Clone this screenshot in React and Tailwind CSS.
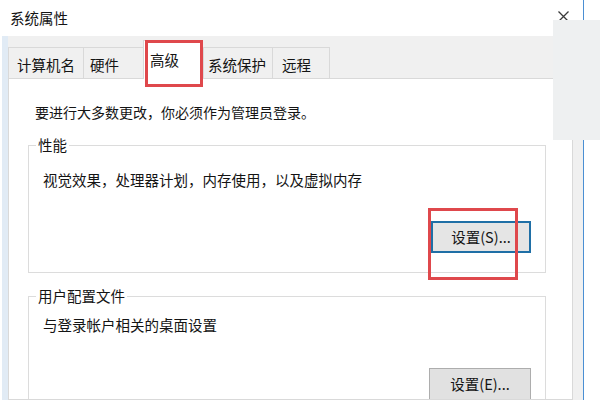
export default function App() {
  const tabs = [
    { label: '计算机名', w: 'w-[75px]', pl: 'pl-[8px]' },
    { label: '硬件', w: 'w-[60px]', pl: 'pl-[6px]' },
    { label: '高级', w: 'w-[60px]', pl: 'pl-[6px]', active: true },
    { label: '系统保护', w: 'w-[69px]', pl: 'pl-[4px]' },
    { label: '远程', w: 'w-[58px]', pl: 'pl-[9px]', last: true },
  ];

  return (
    <div className="relative w-[600px] h-[400px] overflow-hidden bg-white text-[#141414] font-['Noto_Sans_CJK_SC',sans-serif]">
      <div className="flex h-full">
        <div className="w-[2px] shrink-0 bg-white" />
        <div className="w-[582px] shrink-0 flex flex-col border-r border-[#4b8fd3]">
          {/* title bar */}
          <div className="h-[36px] shrink-0 bg-white flex items-center justify-between pl-[8px] pr-[14px]">
            <span className="text-[14.5px] leading-[20px]">系统属性</span>
            <svg width="11" height="11" viewBox="0 0 11 11" className="mb-[4px]">
              <path d="M0.5 0.5 L10.5 10.5 M10.5 0.5 L0.5 10.5" stroke="#3a3a3a" strokeWidth="1.3" />
            </svg>
          </div>

          {/* dialog body */}
          <div className="flex-1 min-h-0 overflow-hidden flex flex-col bg-[#f0f0f0] border-l-[6px] border-[#e1ebf5] pr-[10px]">
            {/* tab strip */}
            <div className="h-[42px] shrink-0 flex items-end">
              {tabs.map((t) =>
                t.active ? (
                  <div
                    key={t.label}
                    className={`relative z-10 ${t.w} h-[39px] -mb-[1px] bg-white border-t border-l border-[#d9d9d9] flex items-center ${t.pl} pb-[1px] text-[14.5px]`}
                  >
                    {t.label}
                  </div>
                ) : (
                  <div
                    key={t.label}
                    className={`${t.w} h-[31px] bg-[#f0f0f0] border-t border-l ${t.last ? 'border-r' : ''} border-[#d9d9d9] flex items-center ${t.pl} pt-[3px] text-[14.5px]`}
                  >
                    {t.label}
                  </div>
                )
              )}
            </div>

            {/* tab panel */}
            <div className="flex-1 min-h-0 overflow-hidden bg-white border border-[#d9d9d9]">
              <p className="mt-[23px] pl-[26px] text-[14px] leading-[20px]">
                要进行大多数更改，你必须作为管理员登录。
              </p>

              <div className="relative mt-[23px] ml-[19px] w-[518px] h-[128px] border border-[#dcdcdc]">
                <span className="absolute -top-[11px] left-[7px] bg-white px-[2px] text-[14.5px] leading-[20px]">性能</span>
                <p className="pt-[24px] pl-[14px] text-[14.5px] leading-[20px]">
                  视觉效果，处理器计划，内存使用，以及虚拟内存
                </p>
                <div className="mt-[31px] flex justify-end pr-[14px]">
                  <button className="w-[100px] h-[32px] bg-[#e5e5e5] border-2 border-[#1f6fa6] text-[14.5px] leading-[20px] text-[#141414]">
                    设置(S)...
                  </button>
                </div>
              </div>

              <div className="relative mt-[23px] ml-[19px] w-[518px] h-[160px] border border-[#dcdcdc]">
                <span className="absolute -top-[11px] left-[7px] bg-white px-[2px] text-[14.5px] leading-[20px]">用户配置文件</span>
                <p className="pt-[18px] pl-[14px] text-[14.5px] leading-[20px]">
                  与登录帐户相关的桌面设置
                </p>
                <div className="mt-[33px] flex justify-end pr-[14px]">
                  <button className="w-[102px] h-[32px] bg-[#e1e1e1] border border-[#adadad] text-[14.5px] leading-[20px] text-[#141414]">
                    设置(E)...
                  </button>
                </div>
              </div>
            </div>
          </div>
        </div>
        <div className="flex-1 bg-white" />
      </div>

      {/* pasted grey patch at the right edge */}
      <div className="absolute z-20 left-[553px] top-[20px] w-[47px] h-[120px] bg-[#eef0f1]" />

      {/* red annotation boxes */}
      <div className="absolute z-20 left-[145px] top-[40px] w-[58px] h-[47px] border-[3px] border-[#df484c]" />
      <div className="absolute z-20 left-[428px] top-[208px] w-[90px] h-[72px] border-[3px] border-[#df484c]" />
    </div>
  );
}
